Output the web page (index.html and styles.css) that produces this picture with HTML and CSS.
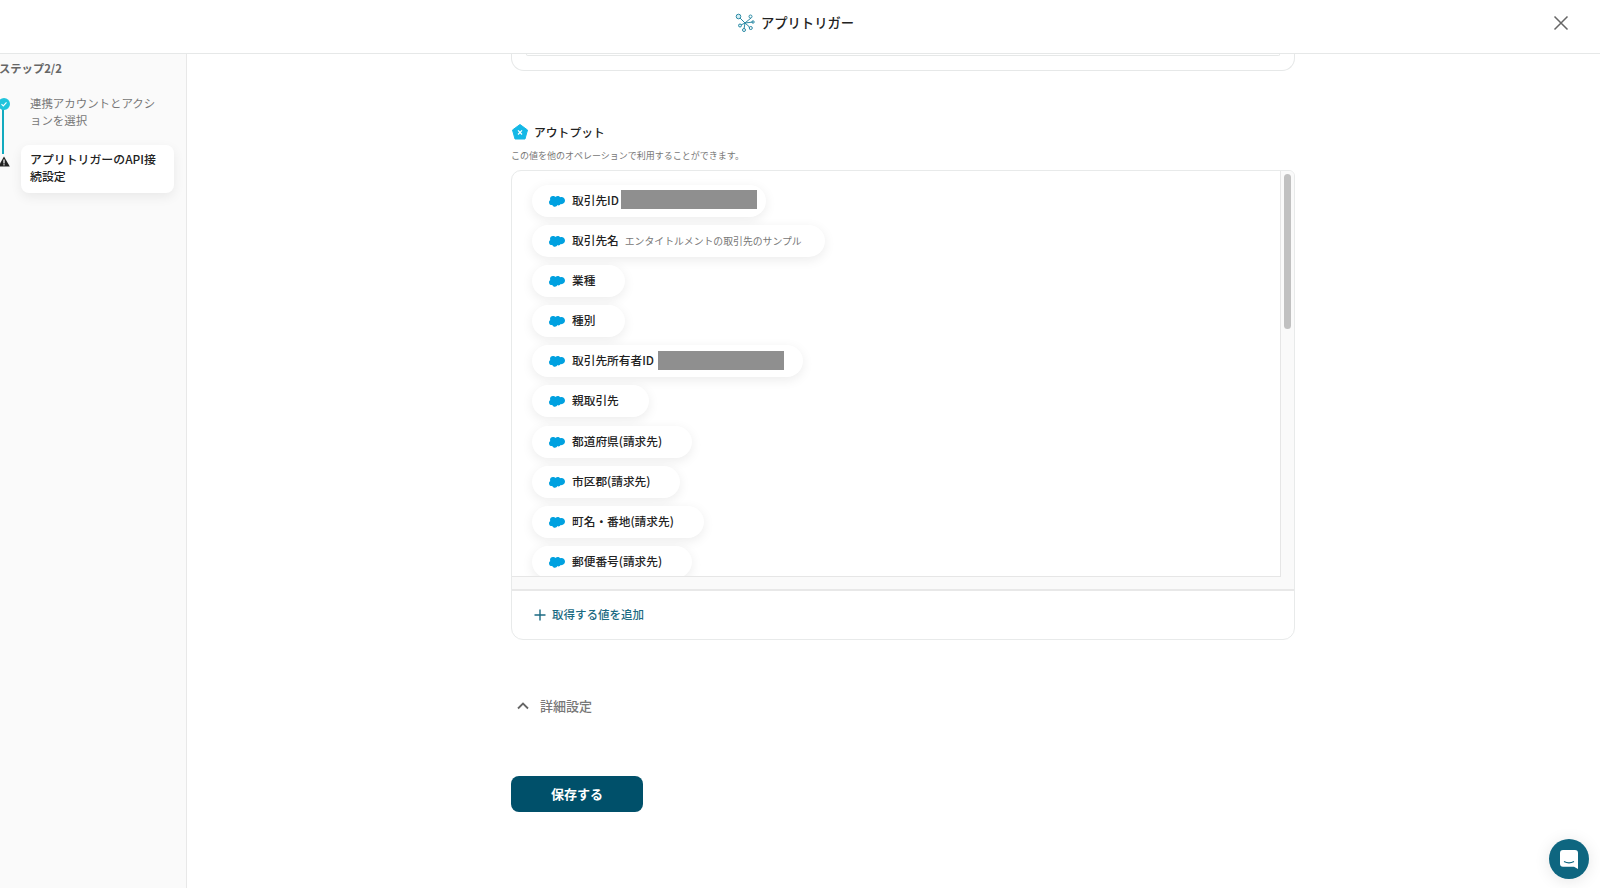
FILE: index.html
```html
<!DOCTYPE html>
<html lang="ja">
<head>
<meta charset="utf-8">
<title>アプリトリガー</title>
<link rel="stylesheet" href="styles.css">
</head>
<body>
<svg class="defs" width="0" height="0" aria-hidden="true">
  <symbol id="cloud" viewBox="0 0 16 12">
    <path fill="#00a1e0" d="M6.6 1.9C7.1 1.3 7.9 1 8.7 1c1 0 1.9.5 2.4 1.3.4-.2.9-.3 1.3-.3C14.400 2 16 3.600 16 5.600s-1.600 3.600-3.600 3.600c-.2 0-.5 0-.7-.1-.4.8-1.300 1.300-2.200 1.300-.4 0-.8-.1-1.100-.3-.4 1-1.400 1.700-2.500 1.700-1.200 0-2.200-.7-2.600-1.800-.2 0-.3.100-.5.100C1.200 10.100 0 8.900 0 7.400c0-1 .5-1.900 1.300-2.300-.2-.4-.3-.8-.3-1.300C1 2.300 2.300 1 3.800 1c.9 0 2.200.3 2.800.9z"/>
  </symbol>
</svg>

<header class="topbar">
  <div class="brand">
    <svg class="brand-icon" viewBox="0 0 20 20" width="20" height="20" fill="none" stroke="#2b8aa5" stroke-width="1">
      <path d="M10 10 4 4M10 10l6-5M10 10l-4 2M10 10l4 3.500M10 10l-1 6M14 13.500l1 3"/>
      <circle cx="3.500" cy="3.500" r="2.300" fill="#d5eef4"/>
      <circle cx="15.500" cy="3.500" r="1.500" fill="#fff"/>
      <circle cx="5" cy="12.500" r="1.500" fill="#d5eef4"/>
      <circle cx="9" cy="17" r="1.500" fill="#fff"/>
      <circle cx="15.800" cy="15" r="1.500" fill="#fff"/>
      <circle cx="18" cy="9" r="1.200" fill="#fff"/>
      <path d="M10 10l8-1"/>
    </svg>
    <span class="brand-name">アプリトリガー</span>
  </div>
  <button class="close" type="button" aria-label="閉じる">
    <svg viewBox="0 0 16 16" width="16" height="16" fill="none" stroke="#666" stroke-width="1.500"><path d="M1.500 1.500l13 13M14.500 1.500l-13 13"/></svg>
  </button>
</header>

<div class="shell">
  <aside class="sidebar">
    <div class="step-count">ステップ2/2</div>
    <ol class="steps">
      <li class="step step-done">
        <span class="marker marker-done">
          <svg viewBox="0 0 12 12" width="12" height="12"><circle cx="6" cy="6" r="6" fill="#22c4dc"/><path d="M3.500 6.200l1.800 1.700 3.200-3.500" fill="none" stroke="#fff" stroke-width="1.100"/></svg>
        </span>
        <span class="step-text">連携アカウントとアクションを選択</span>
      </li>
      <li class="step step-active">
        <span class="marker marker-warn">
          <svg viewBox="0 0 12 11" width="12" height="11"><path d="M6 0.500 11.800 10.500H0.200z" fill="#222"/><rect x="5.400" y="3.500" width="1.200" height="4" fill="#fff"/><rect x="5.400" y="8.200" width="1.200" height="1.200" fill="#fff"/></svg>
        </span>
        <span class="step-text">アプリトリガーのAPI接続設定</span>
      </li>
    </ol>
  </aside>

  <main class="main">
    <div class="column">
      <div class="stub-card"><div class="stub-inner"></div></div>

      <section class="output">
        <h2 class="output-title">
          <svg viewBox="0 0 16 16" width="16" height="16"><path d="M8 .5 15.500 6 13 15H3L.5 6z" fill="#14b8e6" stroke="#14b8e6" stroke-width="1" stroke-linejoin="round"/><path d="M6 6.300l4 4.200M10 6.300l-4 4.200" stroke="#fff" stroke-width="1.200"/></svg>
          アウトプット
        </h2>
        <p class="output-desc">この値を他のオペレーションで利用することができます。</p>

        <div class="output-box">
          <div class="scroll-row">
            <ul class="pills">
              <li class="pill pill-first"><svg class="cloud"><use href="#cloud"/></svg><span class="label">取引先ID</span><span class="mask mask-a"></span></li>
              <li class="pill"><svg class="cloud"><use href="#cloud"/></svg><span class="label">取引先名</span><span class="sample">エンタイトルメントの取引先のサンプル</span></li>
              <li class="pill"><svg class="cloud"><use href="#cloud"/></svg><span class="label">業種</span></li>
              <li class="pill"><svg class="cloud"><use href="#cloud"/></svg><span class="label">種別</span></li>
              <li class="pill"><svg class="cloud"><use href="#cloud"/></svg><span class="label">取引先所有者ID</span><span class="mask mask-b"></span></li>
              <li class="pill"><svg class="cloud"><use href="#cloud"/></svg><span class="label">親取引先</span></li>
              <li class="pill"><svg class="cloud"><use href="#cloud"/></svg><span class="label">都道府県(請求先)</span></li>
              <li class="pill"><svg class="cloud"><use href="#cloud"/></svg><span class="label">市区郡(請求先)</span></li>
              <li class="pill"><svg class="cloud"><use href="#cloud"/></svg><span class="label">町名・番地(請求先)</span></li>
              <li class="pill"><svg class="cloud"><use href="#cloud"/></svg><span class="label">郵便番号(請求先)</span></li>
            </ul>
            <div class="v-track"><div class="v-thumb"></div></div>
          </div>
          <div class="h-track"></div>
          <div class="add-row">
            <svg viewBox="0 0 12 12" width="12" height="12" fill="none" stroke="#1b6a82" stroke-width="1.400"><path d="M6 .5v11M.5 6h11"/></svg>
            <span class="add-label">取得する値を追加</span>
          </div>
        </div>
      </section>

      <div class="advanced">
        <svg viewBox="0 0 12 8" width="12" height="8" fill="none" stroke="#666" stroke-width="1.800"><path d="M1 6.500 6 1.500l5 5"/></svg>
        <span class="advanced-label">詳細設定</span>
      </div>

      <button class="save" type="button"><span class="save-label">保存する</span></button>
    </div>
  </main>
</div>

<button class="chat" type="button" aria-label="チャット">
  <svg viewBox="0 0 18 19" width="18" height="19"><path d="M3 0h12a3 3 0 0 1 3 3v16l-4-2.300H3a3 3 0 0 1-3-3V3a3 3 0 0 1 3-3z" fill="#fff"/><path d="M4 11.500c3 1.600 7 1.600 10 0" fill="none" stroke="#0e6680" stroke-width="1.100"/></svg>
</button>
</body>
</html>
```
FILE: styles.css
```css
* { box-sizing: border-box; }

html, body {
  margin: 0;
  height: 888px;
  overflow: hidden;
}

body {
  font-family: "Noto Sans CJK JP", "Noto Sans", "Liberation Sans", sans-serif;
  color: #222;
  background: #fff;
  display: flex;
  flex-direction: column;
}

.defs { display: block; height: 0; }

.topbar {
  flex: none;
  height: 54px;
  border-bottom: 1px solid #e6e8e8;
  display: flex;
  align-items: center;
  justify-content: center;
  position: relative;
  padding-bottom: 7px;
}

.brand {
  display: flex;
  align-items: center;
  gap: 6px;
  margin-left: -11px;
}

.brand-name {
  font-size: 13.300px;
  font-weight: 500;
  color: #222;
  margin-bottom: 2px;
}

.close {
  position: absolute;
  right: 31px;
  top: 15px;
  padding: 0;
  border: 0;
  background: none;
  line-height: 0;
}

.shell {
  flex: 1;
  display: flex;
  min-height: 0;
}

.sidebar {
  flex: none;
  width: 187px;
  background: #fafafa;
  border-right: 1px solid #e8e8e8;
  padding: 6px 12px 0 0;
}

.step-count {
  font-size: 11.300px;
  font-weight: 700;
  color: #666;
  line-height: 16px;
  margin-left: -1px;
}

.steps {
  list-style: none;
  margin: 19px 0 0;
  padding: 0;
}

.step {
  position: relative;
  font-size: 11.450px;
  line-height: 17px;
  padding: 5px 14px 7px 9px;
  margin-left: 21px;
}

.step-done {
  color: #777;
  padding-top: 0;
  padding-bottom: 16px;
  letter-spacing: 0;
}

.step-done::before {
  content: "";
  position: absolute;
  left: -19px;
  top: 9px;
  width: 2px;
  height: 50px;
  background: #12aabf;
}

.step-active {
  background: #fff;
  border-radius: 8px;
  box-shadow: 0 4px 12px rgba(0, 0, 0, .07);
  font-size: 11.900px;
  font-weight: 500;
  color: #222;
  height: 48px;
}

.marker {
  position: absolute;
  line-height: 0;
}

.marker-done { left: -23px; top: 3px; }
.marker-warn { left: -23px; top: 11px; }

.main {
  flex: 1;
  min-width: 0;
  padding-left: 324px;
}

.column {
  width: 784px;
  display: flex;
  flex-direction: column;
  align-items: flex-start;
}

.stub-card {
  width: 100%;
  height: 17px;
  border: 1px solid #e6e8e8;
  border-top: 0;
  border-radius: 0 0 13px 13px;
  padding: 0 14px;
}

.stub-inner {
  height: 2px;
  border: 1px solid #e6e8e8;
  border-top: 0;
  border-radius: 0 0 8px 8px;
}

.output {
  width: 100%;
  margin-top: 53px;
}

.output-title {
  margin: 0 0 0 1px;
  display: flex;
  align-items: center;
  gap: 6px;
  font-size: 11.800px;
  font-weight: 500;
  line-height: 16px;
  color: #222;
}

.output-desc {
  margin: 9px 0 0;
  font-size: 9px;
  line-height: 14px;
  color: #777;
}

.output-box {
  margin-top: 7px;
  height: 470px;
  border: 1px solid #e8eaea;
  border-radius: 0 0 12px 12px;
  border-top-left-radius: 10px;
  border-top-right-radius: 6px;
  overflow: hidden;
  display: flex;
  flex-direction: column;
}

.scroll-row {
  flex: none;
  height: 406px;
  display: flex;
}

.pills {
  flex: 1;
  list-style: none;
  margin: 0;
  padding: 14px 0 0 20px;
  overflow: hidden;
  display: flex;
  flex-direction: column;
  align-items: flex-start;
  gap: 8.100px;
  min-width: 0;
  height: 406px;
  border-bottom: 1px solid #e6e6e6;
}

.pill {
  flex: none;
  height: 32px;
  display: flex;
  align-items: center;
  padding: 0 30px 0 17px;
  border-radius: 16px;
  background: #fff;
  box-shadow: 0 3px 12px rgba(0, 0, 0, .08);
  font-size: 11.700px;
  font-weight: 500;
  color: #222;
  white-space: nowrap;
}

.label { margin-bottom: 3px; }

.cloud {
  width: 16px;
  height: 12px;
  margin-right: 7px;
  flex: none;
}

.mask {
  display: block;
  height: 19px;
  background: #8f8f8f;
}

.mask-a { width: 136px; margin-left: 2.500px; margin-right: -21px; margin-bottom: 4px; }
.mask-b { width: 126px; margin-left: 4px; margin-right: -11px; margin-bottom: 1px; }

.sample {
  font-size: 9.850px;
  font-weight: 400;
  color: #777;
  margin-left: 6px;
  margin-right: -7px;
}

.v-track {
  flex: none;
  width: 14px;
  height: 406px;
  border-left: 1px solid #e6e6e6;
  background: #fafafa;
  padding: 3px 3px 0;
}

.v-thumb {
  height: 155px;
  border-radius: 4px;
  background: #c1c1c1;
}

.h-track {
  flex: none;
  height: 14px;
  background: #fafafa;
  border-bottom: 2px solid #e8e8e8;
}

.add-row {
  flex: 1;
  display: flex;
  align-items: center;
  gap: 6px;
  padding-left: 22px;
  font-size: 11.500px;
  font-weight: 500;
  color: #1b6a82;
}

.add-label { margin-bottom: 2px; }

.advanced {
  margin-top: 56px;
  display: flex;
  align-items: center;
  gap: 11px;
  padding-left: 6px;
  height: 20px;
  font-size: 13px;
  font-weight: 500;
  color: #777;
}

.advanced-label { margin-bottom: 2px; }

.save {
  margin-top: 60px;
  width: 132px;
  height: 36px;
  padding: 0 0 2px;
  border: 0;
  border-radius: 8px;
  background: #00506a;
  color: #fff;
  font-family: inherit;
  font-size: 13px;
  font-weight: 700;
}

.chat {
  position: absolute;
  right: 11px;
  bottom: 9px;
  width: 40px;
  height: 40px;
  padding: 0;
  border: 0;
  border-radius: 50%;
  background: #0e6680;
  box-shadow: 0 2px 16px rgba(0, 0, 0, .1);
  display: flex;
  align-items: center;
  justify-content: center;
}
```
